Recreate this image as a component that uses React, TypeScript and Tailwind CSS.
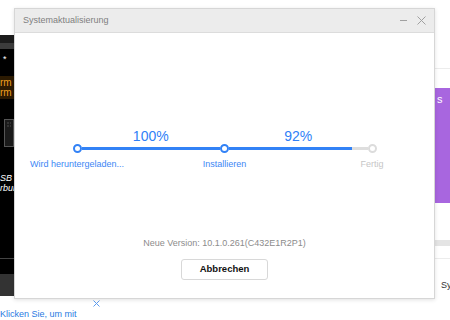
export default function App() {
  const blue = 'bg-[#3282f6]'

  return (
    <div className="relative w-[450px] h-[320px] overflow-hidden bg-white font-['Liberation_Sans',Arial,sans-serif]">
      {/* page behind the dialog */}
      <div className="flex flex-col h-full">
        <div className="flex h-[300px]">
          <div className="w-[14px] flex flex-col pt-[35px] overflow-hidden">
            <div className="flex-1 flex flex-col bg-black">
              <div className="h-[8px] bg-[#1c1c1c]" />
              <div className="h-[6px] bg-[#3c3c3c]" />
              <div className="pl-[3px] pt-[5px] text-[9px] leading-[10px] text-white">*</div>
              <div className="mt-[12px] h-[23px] bg-[#2b1a02] flex flex-col justify-center text-[10px] leading-[10px] text-[#f0a020] whitespace-nowrap">
                <span>rm Sie</span>
                <span>rm n</span>
              </div>
              <div className="mt-[20px] ml-[4px] h-[28px] border border-[#555] bg-[#1a1a1a] p-[2px] grid grid-cols-2 gap-[1px] content-start">
                <div className="h-[2px] bg-[#333]" />
                <div className="h-[2px] bg-[#333]" />
                <div className="h-[2px] bg-[#333]" />
                <div className="h-[2px] bg-[#333]" />
              </div>
              <div className="mt-[26px] text-[9px] leading-[10px] italic text-white whitespace-nowrap">
                <div>SB m</div>
                <div>rbun</div>
              </div>
              <div className="flex-1" />
              <div className="h-[1px] bg-[#444]" />
              <div className="h-[15px]" />
              <div className="h-[20px] bg-[#333]" />
            </div>
            <div className="h-[2px] bg-[#333]" />
          </div>
          <div className="flex-1 flex flex-col">
            <div className="flex-1" />
            <div className="h-[2px] w-[62px] -ml-[14px] bg-[#333]" />
          </div>
          <div className="w-[15px] flex flex-col">
            <div className="h-[68px]" />
            <div className="h-[1px] bg-[#ececec]" />
            <div className="h-[19px]" />
            <div className="h-[115px] bg-[#a866df] pt-[5px] pl-[2px] text-[11px] leading-[12px] text-white">s</div>
            <div className="h-[37px]" />
            <div className="h-[6px] bg-[#e4e4e4]" />
            <div className="h-[12px]" />
            <div className="h-[1px] bg-[#ececec]" />
            <div className="pt-[21px] pl-[6px] text-[9px] leading-[10px] text-[#333] whitespace-nowrap overflow-hidden">Sy</div>
          </div>
        </div>
        <div className="flex items-start">
          <div className="w-[93px] pt-[13px] text-[9px] leading-[11px] text-[#2a7ae2] whitespace-nowrap">Klicken Sie, um mit</div>
          <svg className="mt-[4px]" width="7" height="7" viewBox="0 0 7 7">
            <path d="M0.5 0.5 L6.5 6.5 M6.5 0.5 L0.5 6.5" stroke="#5b9bf0" strokeWidth="1" />
          </svg>
        </div>
      </div>

      {/* dialog */}
      <div className="absolute left-[14px] top-[8px] w-[421px] h-[291px] bg-white border border-[#d6d6d6] shadow-[0_1px_4px_rgba(0,0,0,0.12)] flex flex-col">
        <div className="h-[24px] bg-[#ececec] border-b border-[#dcdcdc] flex items-center justify-between pl-[8px] pr-[8px]">
          <span className="text-[9px] leading-[11px] text-[#808080]">Systemaktualisierung</span>
          <div className="flex items-center gap-[10px]">
            <div className="w-[7px] h-[1px] bg-[#a0a0a0]" />
            <svg width="9" height="9" viewBox="0 0 9 9">
              <path d="M0.5 0.5 L8.5 8.5 M8.5 0.5 L0.5 8.5" stroke="#a0a0a0" strokeWidth="1" />
            </svg>
          </div>
        </div>

        <div className="flex flex-col items-center pt-[95px]">
          <div className="w-[304px]">
            <div className="flex text-[14px] leading-[16px] text-[#2f7ff7]">
              <div className="w-[9px]" />
              <div className="flex-1 text-center">100%</div>
              <div className="w-[9px]" />
              <div className="flex-1 text-center">92%</div>
              <div className="w-[9px]" />
            </div>
            <div className="flex items-center h-[9px]">
              <div className="w-[9px] h-[9px] rounded-full border-2 border-[#3282f6] bg-white" />
              <div className={`flex-1 h-[3px] ${blue}`} />
              <div className="w-[9px] h-[9px] rounded-full border-2 border-[#3282f6] bg-white" />
              <div className="flex-1 h-[3px] flex bg-[#dedede]">
                <div className={`w-[89%] h-full ${blue}`} />
              </div>
              <div className="w-[9px] h-[9px] rounded-full border-2 border-[#dcdcdc] bg-white" />
            </div>
            <div className="flex justify-between mt-[6px] text-[9px] leading-[11px]">
              <div className="w-[9px] flex justify-center whitespace-nowrap text-[#3d87f5]">Wird heruntergeladen...</div>
              <div className="w-[9px] flex justify-center whitespace-nowrap text-[#3d87f5]">Installieren</div>
              <div className="w-[9px] flex justify-center whitespace-nowrap text-[#c6c6c6]">Fertig</div>
            </div>
          </div>

          <div className="mt-[68px] text-[9px] leading-[11px] text-[#8c8c8c]">Neue Version: 10.1.0.261(C432E1R2P1)</div>

          <button className="mt-[10px] w-[87px] h-[21px] rounded-[3px] border border-[#d8d8d8] bg-white text-[9.5px] font-bold text-[#111] flex items-center justify-center">
            Abbrechen
          </button>
        </div>
      </div>
    </div>
  )
}
